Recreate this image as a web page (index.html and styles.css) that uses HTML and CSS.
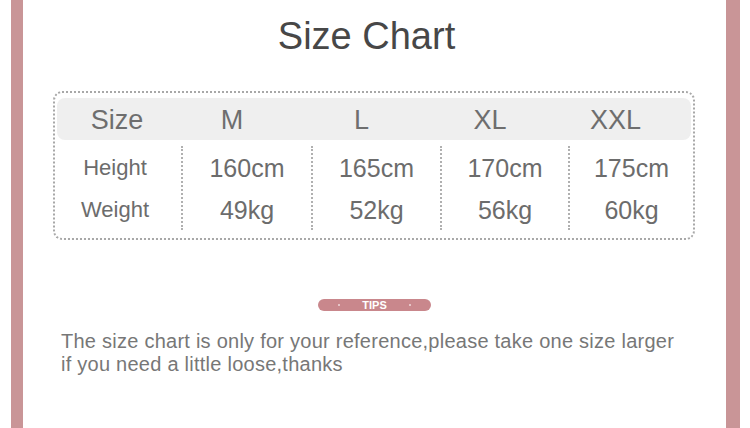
FILE: index.html
```html
<!DOCTYPE html>
<html>
<head>
<meta charset="utf-8">
<link rel="stylesheet" href="styles.css">
</head>
<body>
<div class="page">
  <div class="edge-l"></div>
  <div class="bar bar-l"></div>
  <main class="main">
    <h1 class="title">Size Chart</h1>
    <div class="chart">
      <div class="head">
        <div class="hcell first">Size</div>
        <div class="hcell">M</div>
        <div class="hcell">L</div>
        <div class="hcell">XL</div>
        <div class="hcell">XXL</div>
      </div>
      <div class="body">
        <div class="col first">
          <div class="cell label">Height</div>
          <div class="cell label">Weight</div>
        </div>
        <div class="col">
          <div class="cell">160cm</div>
          <div class="cell">49kg</div>
        </div>
        <div class="col">
          <div class="cell">165cm</div>
          <div class="cell">52kg</div>
        </div>
        <div class="col">
          <div class="cell">170cm</div>
          <div class="cell">56kg</div>
        </div>
        <div class="col">
          <div class="cell">175cm</div>
          <div class="cell">60kg</div>
        </div>
      </div>
    </div>
    <div class="tips">
      <span class="dot"></span>
      <span class="tips-text">TIPS</span>
      <span class="dot"></span>
    </div>
    <p class="note">The size chart is only for your reference,please take one size larger<br>if you need a little loose,thanks</p>
  </main>
  <div class="bar bar-r"></div>
  <div class="edge-r"></div>
</div>
</body>
</html>
```

FILE: styles.css
```css
* { box-sizing: border-box; }
html, body { margin: 0; padding: 0; background: #fff; }
body { font-family: "Liberation Sans", Arial, sans-serif; }

.page {
  display: flex;
  width: 750px;
  height: 428px;
  overflow: hidden;
}
.edge-l { width: 11px; flex: none; }
.edge-r { width: 10px; flex: none; }
.bar { flex: none; background: #c99597; }
.bar-l { width: 12px; }
.bar-r { width: 14px; }

.main {
  flex: 1;
  display: flex;
  flex-direction: column;
  padding-top: 14px;
}

.title {
  margin: 0;
  font-weight: normal;
  font-size: 38px;
  line-height: 44px;
  color: #474747;
  text-align: center;
  padding-right: 16px;
}

.chart {
  margin: 33px 0 0 30px;
  width: 642px;
  border: 2px dotted #a8a8a8;
  border-radius: 9px;
  padding: 5px 2px 0;
}

.head {
  display: grid;
  grid-template-columns: 124px 130px 129px 128px 1fr;
  height: 42px;
  background: #efefef;
  border-radius: 8px;
  align-items: center;
}
.hcell {
  font-size: 27px;
  color: #6e6e6e;
  text-align: center;
  padding: 2px 28px 0 0;
  line-height: 40px;
}
.hcell.first { padding-right: 4px; }

.body {
  display: grid;
  grid-template-columns: 126px 130px 129px 128px 1fr;
  margin: 6px -2px 0;
  padding-bottom: 8px;
}
.col { border-left: 2px dotted #b0b0b0; }
.col.first { border-left: none; }
.cell {
  height: 42px;
  line-height: 42px;
  padding-top: 1px;
  text-align: center;
  font-size: 25px;
  color: #6c6c6c;
}
.cell.label {
  font-size: 22px;
  padding-right: 6px;
}

.tips {
  margin: 59px auto 0;
  width: 113px;
  height: 12px;
  border-radius: 6px;
  background: #c9878c;
  display: flex;
  align-items: center;
  justify-content: center;
  gap: 22px;
}
.tips-text {
  color: #fff;
  font-weight: bold;
  font-size: 11px;
  line-height: 12px;
}
.dot {
  width: 2px;
  height: 2px;
  border-radius: 50%;
  background: #f1dadb;
}

.note {
  margin: 19px 0 0 38px;
  font-size: 20px;
  letter-spacing: 0.25px;
  line-height: 23px;
  color: #777;
}
```
